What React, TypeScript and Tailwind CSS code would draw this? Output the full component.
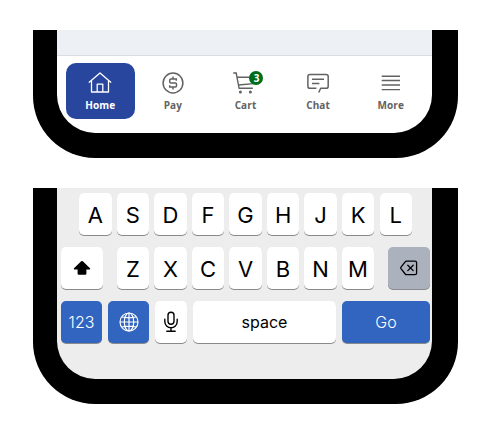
import type { ReactNode } from "react";

const HomeIcon = () => (
  <svg width="24" height="24" viewBox="0 0 24 24" fill="none" stroke="currentColor" strokeWidth="1.3" strokeLinejoin="round" strokeLinecap="round">
    <path d="M1.2 11.2 12 2l10.800 9.200M3.500 9.700v11.300h17V9.700M9.200 21v-7.800h5.600v7.800" />
  </svg>
);

const PayIcon = () => (
  <svg width="24" height="24" viewBox="0 0 24 24" fill="none" stroke="currentColor" strokeWidth="1.5">
    <circle cx="12" cy="12" r="9.900" />
    <path d="M15.300 9.700V8H9.900Q8.700 8 8.700 9.200v1.500q0 1.200 1.200 1.200h4.400q1.200 0 1.200 1.200v1.700q0 1.200-1.200 1.200H8.700v-1.700M12 5.500V8M12 16v2.600" />
  </svg>
);

const CartIcon = () => (
  <svg width="24" height="24" viewBox="0 0 24 24" fill="none" stroke="currentColor" strokeWidth="1.400">
    <path d="M.2 2h3l2.900 15.300h13.700M4 6.200h18L20.200 12.600 5.600 14" />
    <circle cx="7.400" cy="21" r="1.500" fill="currentColor" stroke="none" />
    <circle cx="17.400" cy="21" r="1.500" fill="currentColor" stroke="none" />
  </svg>
);

const ChatIcon = () => (
  <svg width="24" height="24" viewBox="0 0 24 24" fill="none" stroke="currentColor" strokeWidth="1.500" strokeLinejoin="round">
    <path d="M12.700 21.500l2-4.200h5.400q2.100 0 2.100-2.100V5.600q0-2.100-2.100-2.100H4Q1.900 3.500 1.900 5.600v9.600q0 2.100 2.100 2.100h6.400M6 8.300h12M6 12.500h7.400" />
  </svg>
);

const MoreIcon = () => (
  <svg width="24" height="24" viewBox="0 0 24 24" fill="none" stroke="currentColor" strokeWidth="1.400">
    <path d="M2.700 5.200h18.300M2.700 9.500h18.300M2.700 14h18.300M2.700 18.600h18.300" />
  </svg>
);

const ShiftIcon = () => (
  <svg width="18" height="16" viewBox="0 0 18 16" fill="currentColor">
    <path d="M8.200 1.300q.8-.7 1.600 0l7.200 6.900q.8 1-.4 1.200h-3.200v4.200q0 1.200-1.200 1.200H5.800q-1.200 0-1.200-1.200V9.400H1.400q-1.200-.2-.4-1.200z" />
  </svg>
);

const DeleteIcon = () => (
  <svg width="18" height="16" viewBox="0 0 18 16" fill="none" stroke="currentColor" strokeWidth="1.300" strokeLinecap="round" strokeLinejoin="round">
    <path d="M6.500 1.200h8.500q1.600 0 1.600 1.600v10.200q0 1.600-1.600 1.600H6.500q-.8 0-1.300-.6L1 8.600q-.5-.7 0-1.400l4.200-5.400q.5-.6 1.300-.6zM7.800 5.200l5.400 5.400M13.200 5.200 7.800 10.600" />
  </svg>
);

const GlobeIcon = () => (
  <svg width="20" height="20" viewBox="0 0 20 20" fill="none" stroke="currentColor" strokeWidth="1.200">
    <circle cx="10" cy="10" r="9" />
    <ellipse cx="10" cy="10" rx="4.700" ry="9" />
    <path d="M10 1v18M1 10h18M2.900 5Q10 6.600 17.100 5M2.900 15q7.100-1.600 14.200 0" />
  </svg>
);

const MicIcon = () => (
  <svg width="16" height="22" viewBox="0 0 16 22" fill="none" stroke="currentColor" strokeWidth="1.400" strokeLinecap="round">
    <rect x="5" y="1.300" width="6" height="12" rx="3" />
    <path d="M1.800 8.300v2.300a6.200 6.200 0 0 0 12.400 0V8.300M8 17v3M3.800 20.200h8.400" />
  </svg>
);

const navItems = [
  { label: "Home", icon: <HomeIcon />, active: true },
  { label: "Pay", icon: <PayIcon /> },
  { label: "Cart", icon: <CartIcon />, badge: 3 },
  { label: "Chat", icon: <ChatIcon /> },
  { label: "More", icon: <MoreIcon /> },
];

function Phone({ children, className }: { children: ReactNode; className: string }) {
  return (
    <div className="w-[425px] rounded-b-[62px] bg-black pr-[26px] pb-[25px] pl-[24px]">
      <div className={`w-[375px] overflow-hidden rounded-b-[38px] ${className}`}>{children}</div>
    </div>
  );
}

function Key({ className = "bg-white text-black", children }: { className?: string; children: ReactNode }) {
  return (
    <div className={`flex h-[42px] items-center justify-center rounded-[5px] shadow-[0_1px_0_#898a8d] ${className}`}>
      {children}
    </div>
  );
}

function LetterKey({ letter }: { letter: string }) {
  return (
    <Key className="w-[32.5px] bg-white text-[22px] leading-none text-black">
      <span className="pt-px font-[380]">{letter}</span>
    </Key>
  );
}

export default function App() {
  return (
    <main className="flex h-[434px] w-[491px] flex-col items-start gap-[30px] overflow-hidden bg-white pt-[30px] pl-[33px]">
      <Phone className="h-[103px] bg-white font-['Open_Sans','Noto_Sans',sans-serif]">
        <div className="h-[26px] border-b border-[#dcdddf] bg-[#edf1f6]" />
        <nav className="flex gap-1 pt-[7px] pr-[7px] pl-[9px]">
          {navItems.map(({ label, icon, active, badge }) => (
            <div
              key={label}
              className={`flex h-[56px] flex-1 flex-col items-center rounded-[10px] pt-[8px] ${active ? "bg-[#28469e] text-white" : "text-[#626262]"}`}
            >
              <div className="relative h-6 w-6">
                {icon}
                {badge && (
                  <span className="absolute top-0 left-[16px] flex h-[14px] w-[14px] items-center justify-center rounded-full bg-[#006b18] text-[10px] leading-none font-bold text-white">
                    {badge}
                  </span>
                )}
              </div>
              <span className="mt-[3px] text-[10px] leading-[14px] font-bold tracking-[0.1px]">{label}</span>
            </div>
          ))}
        </nav>
      </Phone>

      <Phone className="flex h-[191px] flex-col gap-[12px] bg-[#ededed] pt-[5px] pr-[2px] pl-[4px] font-['Inter',sans-serif]">
        <div className="flex justify-between pr-[18px] pl-[18px]">
          {"ASDFGHJKL".split("").map((l) => (
            <LetterKey key={l} letter={l} />
          ))}
        </div>
        <div className="flex justify-between">
          <Key className="w-[42px] bg-white text-black"><ShiftIcon /></Key>
          <div className="flex gap-[5px]">
            {"ZXCVBNM".split("").map((l) => (
              <LetterKey key={l} letter={l} />
            ))}
          </div>
          <Key className="w-[42px] bg-[#abb2be] text-black"><DeleteIcon /></Key>
        </div>
        <div className="flex gap-[6px] text-[16px]">
          <Key className="w-[41px] bg-[#3165bf] font-[350] text-white">123</Key>
          <Key className="w-[41px] bg-[#3165bf] text-white"><GlobeIcon /></Key>
          <Key className="w-[32px] bg-white text-black"><MicIcon /></Key>
          <Key className="w-[143px] bg-white font-[370] text-black">space</Key>
          <Key className="w-[88px] bg-[#3165bf] font-[350] text-white">Go</Key>
        </div>
      </Phone>
    </main>
  );
}
